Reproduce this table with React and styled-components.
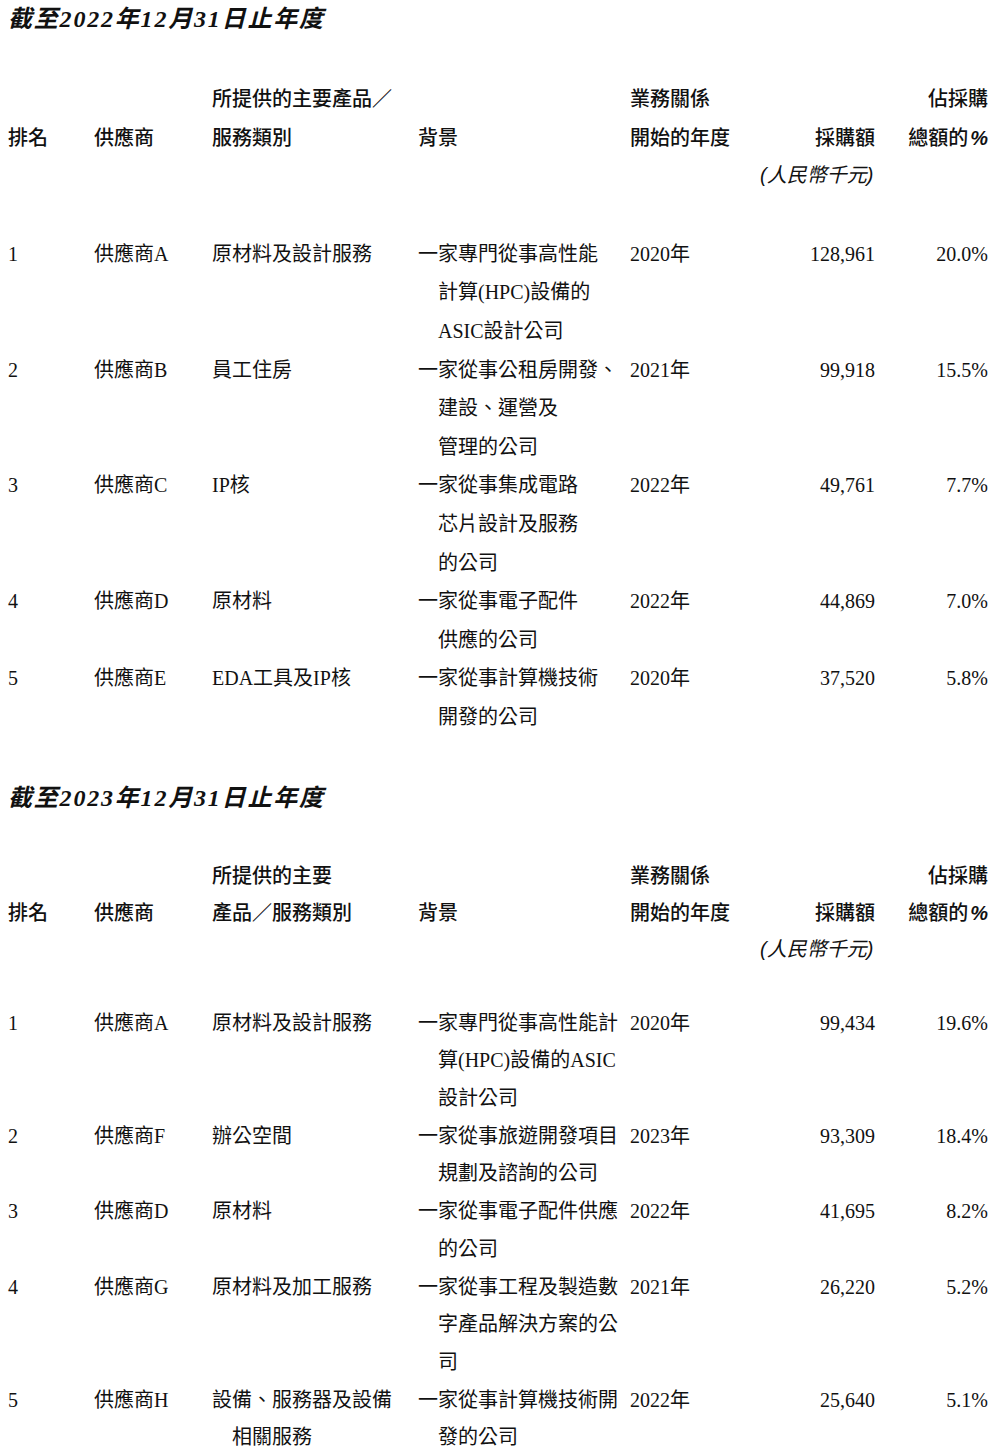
import React from 'react';
import styled, { createGlobalStyle } from 'styled-components';

const GlobalStyle = createGlobalStyle`
	html, body {
		margin: 0;
		padding: 0;
		background: #fff;
	}
	body {
		color: #111;
		font-family: 'Liberation Serif', 'Noto Sans CJK TC', serif;
	}
`;

const Page = styled.div`
	width: 980px;
	padding: 0 12px 0 8px;
`;

const Title = styled.h2`
	margin: 0 0 ${(p) => p.$after}px;
	font-family: 'Liberation Serif', 'Noto Sans CJK TC', serif;
	font-size: 24px;
	font-weight: 700;
	font-style: italic;
	letter-spacing: 1.8px;
	line-height: 38px;
`;

const Table = styled.div`
	--lh: ${(p) => p.$lh}px;
	line-height: var(--lh);
	font-size: 20px;
`;

const Row = styled.div`
	display: grid;
	grid-template-columns: 86px 118px 206px 212px 130px 115px 113px;
	align-items: start;
`;

const HeadRow = styled(Row)`
	font-family: 'Noto Sans CJK TC', sans-serif;
	font-weight: 500;
	margin-bottom: ${(p) => p.$after}px;
`;

const Cell = styled.div`
	padding-top: calc(var(--lh) * ${(p) => p.$skip || 0});
	text-align: ${(p) => (p.$right ? 'right' : 'left')};
	white-space: nowrap;
`;

const Line = styled.span`
	display: block;
	padding-left: ${(p) => (p.$indent ? '20px' : '0')};
`;

const Unit = styled.span`
	display: block;
	font-style: italic;
	font-weight: 400;
	padding-right: 5px;
	font-family: 'Liberation Sans', 'Noto Sans CJK TC', sans-serif;
`;

const Pct = styled.i`
	font-family: 'Liberation Sans', sans-serif;
	font-weight: 700;
	padding-left: 2px;
`;

const Lines = ({ text, hanging }) => {
	const list = Array.isArray(text) ? text : [text];
	return list.map((t, i) => (
		<Line key={i} $indent={hanging && i > 0}>
			{t}
		</Line>
	));
};

const Header = ({ product, after }) => (
	<HeadRow $after={after}>
		<Cell $skip={1}>排名</Cell>
		<Cell $skip={1}>供應商</Cell>
		<Cell>
			<Lines text={product} />
		</Cell>
		<Cell $skip={1}>背景</Cell>
		<Cell>
			<Lines text={['業務關係', '開始的年度']} />
		</Cell>
		<Cell $right $skip={1}>
			<Line>採購額</Line>
			<Unit>(人民幣千元)</Unit>
		</Cell>
		<Cell $right>
			<Line>佔採購</Line>
			<Line>
				總額的<Pct>%</Pct>
			</Line>
		</Cell>
	</HeadRow>
);

const SupplierTable = ({ lh, product, headAfter, rows }) => (
	<Table $lh={lh}>
		<Header product={product} after={headAfter} />
		{rows.map((r) => (
			<Row key={r.rank}>
				<Cell>{r.rank}</Cell>
				<Cell>{r.supplier}</Cell>
				<Cell>
					<Lines text={r.product} hanging />
				</Cell>
				<Cell>
					<Lines text={r.background} hanging />
				</Cell>
				<Cell>{r.year}</Cell>
				<Cell $right>{r.amount}</Cell>
				<Cell $right>{r.share}</Cell>
			</Row>
		))}
	</Table>
);

const rows2022 = [
	{
		rank: 1,
		supplier: '供應商A',
		product: '原材料及設計服務',
		background: ['一家專門從事高性能', '計算(HPC)設備的', 'ASIC設計公司'],
		year: '2020年',
		amount: '128,961',
		share: '20.0%',
	},
	{
		rank: 2,
		supplier: '供應商B',
		product: '員工住房',
		background: ['一家從事公租房開發、', '建設、運營及', '管理的公司'],
		year: '2021年',
		amount: '99,918',
		share: '15.5%',
	},
	{
		rank: 3,
		supplier: '供應商C',
		product: 'IP核',
		background: ['一家從事集成電路', '芯片設計及服務', '的公司'],
		year: '2022年',
		amount: '49,761',
		share: '7.7%',
	},
	{
		rank: 4,
		supplier: '供應商D',
		product: '原材料',
		background: ['一家從事電子配件', '供應的公司'],
		year: '2022年',
		amount: '44,869',
		share: '7.0%',
	},
	{
		rank: 5,
		supplier: '供應商E',
		product: 'EDA工具及IP核',
		background: ['一家從事計算機技術', '開發的公司'],
		year: '2020年',
		amount: '37,520',
		share: '5.8%',
	},
];

const rows2023 = [
	{
		rank: 1,
		supplier: '供應商A',
		product: '原材料及設計服務',
		background: ['一家專門從事高性能計', '算(HPC)設備的ASIC', '設計公司'],
		year: '2020年',
		amount: '99,434',
		share: '19.6%',
	},
	{
		rank: 2,
		supplier: '供應商F',
		product: '辦公空間',
		background: ['一家從事旅遊開發項目', '規劃及諮詢的公司'],
		year: '2023年',
		amount: '93,309',
		share: '18.4%',
	},
	{
		rank: 3,
		supplier: '供應商D',
		product: '原材料',
		background: ['一家從事電子配件供應', '的公司'],
		year: '2022年',
		amount: '41,695',
		share: '8.2%',
	},
	{
		rank: 4,
		supplier: '供應商G',
		product: '原材料及加工服務',
		background: ['一家從事工程及製造數', '字產品解決方案的公', '司'],
		year: '2021年',
		amount: '26,220',
		share: '5.2%',
	},
	{
		rank: 5,
		supplier: '供應商H',
		product: ['設備、服務器及設備', '相關服務'],
		background: ['一家從事計算機技術開', '發的公司'],
		year: '2022年',
		amount: '25,640',
		share: '5.1%',
	},
];

const Spacer = styled.div`
	height: ${(p) => p.$h}px;
`;

const App = () => (
	<Page>
		<GlobalStyle />
		<Title $after={41}>截至2022年12月31日止年度</Title>
		<SupplierTable
			lh={38.6}
			headAfter={40}
			product={['所提供的主要產品／', '服務類別']}
			rows={rows2022}
		/>
		<Spacer $h={42} />
		<Title $after={39}>截至2023年12月31日止年度</Title>
		<SupplierTable
			lh={37.7}
			headAfter={36}
			product={['所提供的主要', '產品／服務類別']}
			rows={rows2023}
		/>
	</Page>
);

export default App;
